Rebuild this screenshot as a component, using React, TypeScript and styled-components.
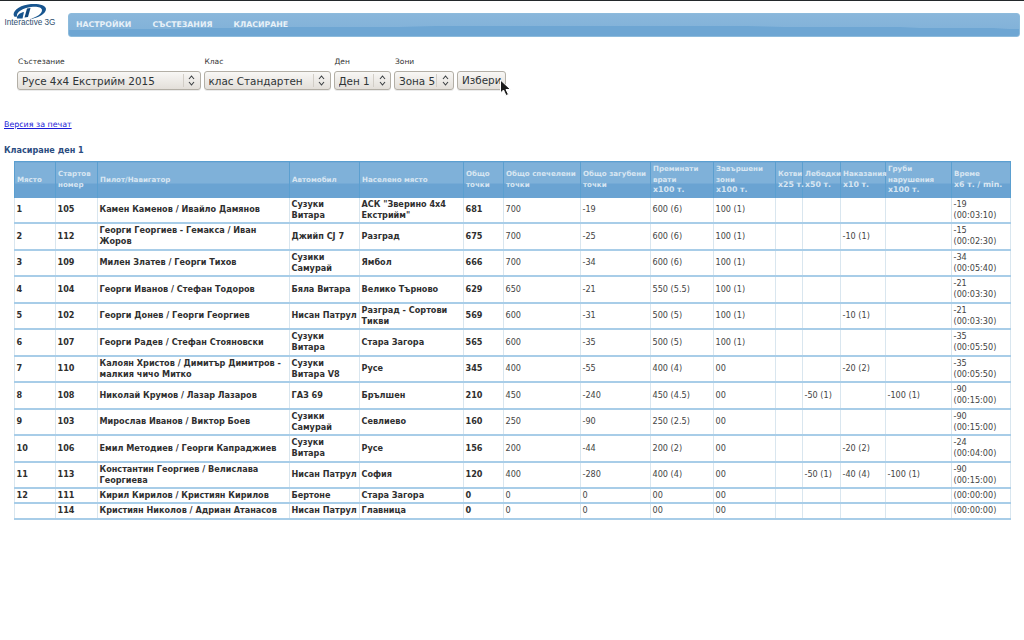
import React from "react";
import styled, { createGlobalStyle } from "styled-components";

const Global = createGlobalStyle`
  html, body { margin: 0; padding: 0; background: #fff; }
  body { font-family: "DejaVu Sans", sans-serif; font-size: 8px; color: #333; }
`;

const Page = styled.div`
  width: 1024px;
  height: 640px;
  overflow: hidden;
  border-top: 1px solid #23282b;
  box-sizing: border-box;
`;

const Header = styled.header`
  display: flex;
  align-items: flex-start;
  padding-top: 2px;
  height: 36px;
  box-sizing: border-box;
`;

const LogoBox = styled.div`
  width: 68px;
  height: 28px;
  display: flex;
  flex-direction: column;
  align-items: center;
  padding-right: 8px;
  box-sizing: border-box;
`;

const LogoText = styled.span`
  font-family: "Liberation Sans", sans-serif;
  font-size: 8.2px;
  line-height: 8px;
  color: #2f4f6f;
  white-space: nowrap;
  margin-top: -1px;
`;

const Menu = styled.nav`
  margin-top: 10px;
  width: 952px;
  height: 24px;
  box-sizing: border-box;
  border-radius: 3px;
  border: 1px solid #8dbbdc;
  background:
    radial-gradient(800px 17px at 55% 29px, #6ea6d3 99%, transparent 100%),
    linear-gradient(#8ab7db, #7fb0d8);
  display: flex;
  align-items: center;
  padding: 0 0 2px 7px;
  gap: 21px;
`;

const MenuItem = styled.a`
  font-size: 7.8px;
  font-weight: bold;
  color: #e8f1f8;
  white-space: nowrap;
`;

const FilterForm = styled.form`
  display: flex;
  align-items: flex-end;
  gap: 3px;
  margin: 20px 0 0 17px;
`;

const Field = styled.div`
  display: flex;
  flex-direction: column;
  gap: 4px;
`;

const FieldLabel = styled.label`
  font-size: 7.5px;
  line-height: 10px;
  color: #333;
  padding-left: 1px;
`;

const SelectBox = styled.div<{ $w: number }>`
  width: ${(p) => p.$w}px;
  height: 19px;
  box-sizing: border-box;
  border: 1px solid #b3afa6;
  border-radius: 3px;
  background: linear-gradient(#f8f7f5, #e3dfd9);
  box-shadow: 0 1px 0 rgba(0, 0, 0, 0.08);
  display: flex;
  align-items: center;
  font-size: 10.4px;
  color: #2e3436;
  padding-left: 4px;
  white-space: nowrap;
`;

const SelectValue = styled.span`
  flex: 1;
  overflow: hidden;
`;

const Spin = styled.span`
  width: 16px;
  height: 13px;
  border-left: 1px solid #d2cec7;
  display: flex;
  align-items: center;
  justify-content: center;
  flex: none;
`;

const ChooseButton = styled.div`
  width: 49px;
  height: 19px;
  box-sizing: border-box;
  border: 1px solid #b3afa6;
  border-radius: 3px;
  background: linear-gradient(#f8f7f5, #e3dfd9);
  box-shadow: 0 1px 0 rgba(0, 0, 0, 0.08);
  font-size: 10.4px;
  line-height: 17px;
  color: #2e3436;
  padding-left: 4px;
  position: relative;
`;

const Pointer = styled.svg`
  position: absolute;
  left: 41px;
  top: 7px;
`;

const PrintLink = styled.a`
  display: block;
  margin: 30px 0 0 4px;
  font-size: 7.9px;
  line-height: 10px;
  color: #1a1ad6;
  text-decoration: underline;
`;

const Title = styled.h2`
  margin: 15px 0 0 4px;
  font-size: 8.1px;
  line-height: 11px;
  font-weight: bold;
  color: #2b4c80;
`;

const Table = styled.table`
  margin: 5px 0 0 14px;
  width: 996px;
  table-layout: fixed;
  border-collapse: collapse;
  font-size: 8.15px;
`;

const Th = styled.th`
  height: 36px;
  padding: 0 2px;
  box-sizing: border-box;
  text-align: left;
  vertical-align: middle;
  font-size: 7.1px;
  line-height: 10.5px;
  font-weight: bold;
  color: #d8e6f2;
  border: 1px solid #5b9fd0;
  border-width: 1px 1px 0 1px;
  background: linear-gradient(#7fb1d9 0 58%, #6aa3d2 58% 100%);
  white-space: nowrap;
`;

const ThSmall = styled.span`
  font-size: 7.8px;
`;

const Td = styled.td<{ $strong?: boolean }>`
  padding: 1px 2px 1px 1.5px;
  line-height: 11.25px;
  font-weight: ${(p) => (p.$strong ? "bold" : "normal")};
  color: ${(p) => (p.$strong ? "#2f2f2f" : "#444")};
  border: 1px solid #d9e6ef;
  border-bottom: 2px solid #a8cde8;
  border-top: none;
  vertical-align: middle;
  overflow: hidden;
`;

const widths = [41, 42, 192, 70, 104, 40, 77, 70, 63, 62, 27, 38, 45, 66, 59];

const heads: React.ReactNode[] = [
  "Място",
  <>Стартов<br />номер</>,
  "Пилот/Навигатор",
  "Автомобил",
  "Населено място",
  <>Общо<br />точки</>,
  <>Общо спечелени<br />точки</>,
  <>Общо загубени<br />точки</>,
  <>Преминати<br />врати<br /><ThSmall>x100 т.</ThSmall></>,
  <>Завършени<br />зони<br /><ThSmall>x100 т.</ThSmall></>,
  <>Котви<br /><ThSmall>x25 т.</ThSmall></>,
  <>Лебедки<br /><ThSmall>x50 т.</ThSmall></>,
  <>Наказания<br /><ThSmall>x10 т.</ThSmall></>,
  <>Груби<br />нарушения<br /><ThSmall>x100 т.</ThSmall></>,
  <>Време<br /><ThSmall>x6 т. / min.</ThSmall></>,
];

type Row = [string, string, string, string, string, string, string, string, string, string, string, string, string, string, React.ReactNode];

const rows: Row[] = [
  ["1", "105", "Камен Каменов / Ивайло Дамянов", "Сузуки Витара", 'АСК "Зверино 4х4 Екстрийм"', "681", "700", "-19", "600 (6)", "100 (1)", "", "", "", "", <>-19<br />(00:03:10)</>],
  ["2", "112", "Георги Георгиев - Гемакса / Иван Жоров", "Джийп CJ 7", "Разград", "675", "700", "-25", "600 (6)", "100 (1)", "", "", "-10 (1)", "", <>-15<br />(00:02:30)</>],
  ["3", "109", "Милен Златев / Георги Тихов", "Сузики Самурай", "Ямбол", "666", "700", "-34", "600 (6)", "100 (1)", "", "", "", "", <>-34<br />(00:05:40)</>],
  ["4", "104", "Георги Иванов / Стефан Тодоров", "Бяла Витара", "Велико Търново", "629", "650", "-21", "550 (5.5)", "100 (1)", "", "", "", "", <>-21<br />(00:03:30)</>],
  ["5", "102", "Георги Донев / Георги Георгиев", "Нисан Патрул", "Разград - Сортови Тикви", "569", "600", "-31", "500 (5)", "100 (1)", "", "", "-10 (1)", "", <>-21<br />(00:03:30)</>],
  ["6", "107", "Георги Радев / Стефан Стояновски", "Сузуки Витара", "Стара Загора", "565", "600", "-35", "500 (5)", "100 (1)", "", "", "", "", <>-35<br />(00:05:50)</>],
  ["7", "110", "Калоян Христов / Димитър Димитров - малкия чичо Митко", "Сузуки Витара V8", "Русе", "345", "400", "-55", "400 (4)", "00", "", "", "-20 (2)", "", <>-35<br />(00:05:50)</>],
  ["8", "108", "Николай Крумов / Лазар Лазаров", "ГАЗ 69", "Брълшен", "210", "450", "-240", "450 (4.5)", "00", "", "-50 (1)", "", "-100 (1)", <>-90<br />(00:15:00)</>],
  ["9", "103", "Мирослав Иванов / Виктор Боев", "Сузики Самурай", "Севлиево", "160", "250", "-90", "250 (2.5)", "00", "", "", "", "", <>-90<br />(00:15:00)</>],
  ["10", "106", "Емил Методиев / Георги Капраджиев", "Сузуки Витара", "Русе", "156", "200", "-44", "200 (2)", "00", "", "", "-20 (2)", "", <>-24<br />(00:04:00)</>],
  ["11", "113", "Константин Георгиев / Велислава Георгиева", "Нисан Патрул", "София", "120", "400", "-280", "400 (4)", "00", "", "-50 (1)", "-40 (4)", "-100 (1)", <>-90<br />(00:15:00)</>],
  ["12", "111", "Кирил Кирилов / Кристиян Кирилов", "Бертоне", "Стара Загора", "0", "0", "0", "00", "00", "", "", "", "", "(00:00:00)"],
  ["", "114", "Кристиян Николов / Адриан Атанасов", "Нисан Патрул", "Главница", "0", "0", "0", "00", "00", "", "", "", "", "(00:00:00)"],
];

const strongCols = new Set([0, 1, 2, 3, 4, 5]);

const Chevrons = () => (
  <svg width="7" height="11" viewBox="0 0 7 11" fill="none" stroke="#3a3f42" strokeWidth="1.1">
    <path d="M1 4l2.500-3L6 4M1 7l2.500 3L6 7" />
  </svg>
);

const Select = ({ w, value }: { w: number; value: string }) => (
  <SelectBox $w={w}>
    <SelectValue>{value}</SelectValue>
    <Spin><Chevrons /></Spin>
  </SelectBox>
);

export default function App() {
  return (
    <Page>
      <Global />
      <Header>
        <LogoBox>
          <svg width="36" height="17" viewBox="0 0 36 17">
            <path d="M2 13C0 9 6 3 16 1.500c9-1.500 18 .5 18 4.500 0 5-8 9-16 10 7-2 12-5 12-9 0-3-6-4-11-3C11 5 4 9 5 13.500 3.500 14 2.500 14 2 13z" fill="#17558f" />
            <path d="M5 15.500C4 13 8 9.500 12 9l-1.500 6.500z" fill="#17558f" />
            <path d="M15 5.500l3.500-.5L16 14l-3.500.5z" fill="#12487d" />
          </svg>
          <LogoText>Interactive 3G</LogoText>
        </LogoBox>
        <Menu>
          <MenuItem>НАСТРОЙКИ</MenuItem>
          <MenuItem>СЪСТЕЗАНИЯ</MenuItem>
          <MenuItem>КЛАСИРАНЕ</MenuItem>
        </Menu>
      </Header>
      <FilterForm>
        <Field>
          <FieldLabel>Състезание</FieldLabel>
          <Select w={183.5} value="Русе 4х4 Екстрийм 2015" />
        </Field>
        <Field>
          <FieldLabel>Клас</FieldLabel>
          <Select w={127} value="клас Стандартен" />
        </Field>
        <Field>
          <FieldLabel>Ден</FieldLabel>
          <Select w={57.5} value="Ден 1" />
        </Field>
        <Field>
          <FieldLabel>Зони</FieldLabel>
          <Select w={60} value="Зона 5" />
        </Field>
        <ChooseButton>
          Избери
          <Pointer width="12" height="18" viewBox="0 0 12 18">
            <path d="M1.500 1v13l3-3 2.500 5.500 2.500-1L7 10.500h4.500z" fill="#1c1c1c" stroke="#fff" strokeWidth="1" />
          </Pointer>
        </ChooseButton>
      </FilterForm>
      <PrintLink>Версия за печат</PrintLink>
      <Title>Класиране ден 1</Title>
      <Table>
        <colgroup>
          {widths.map((w, i) => (
            <col key={i} style={{ width: w }} />
          ))}
        </colgroup>
        <thead>
          <tr>
            {heads.map((h, i) => (
              <Th key={i}>{h}</Th>
            ))}
          </tr>
        </thead>
        <tbody>
          {rows.map((r, i) => (
            <tr key={i}>
              {r.map((c, j) => (
                <Td key={j} $strong={strongCols.has(j)}>{c}</Td>
              ))}
            </tr>
          ))}
        </tbody>
      </Table>
    </Page>
  );
}
